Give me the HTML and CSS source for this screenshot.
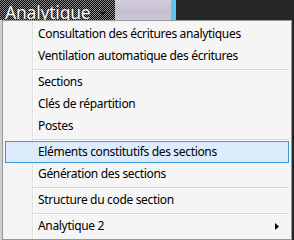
FILE: index.html
```html
<!DOCTYPE html>
<html lang="fr">
<head>
  <meta charset="UTF-8" />
  <title>Menu Analytique</title>
  <link rel="stylesheet" href="styles.css">
</head>
<body>

  <div class="topbar">
    <div class="tab">
      <span class="tab-label">Analytique</span>
      <span class="tab-caret"></span>
    </div>
    <div class="strip"></div>
    <div class="accent"></div>
    <div class="dark"></div>
  </div>

  <div class="stage">
    <div class="edge-left"></div>

    <ul class="menu">
      <li class="item">Consultation des écritures analytiques</li>
      <li class="item">Ventilation automatique des écritures</li>
      <li class="sep"></li>
      <li class="item">Sections</li>
      <li class="item">Clés de répartition</li>
      <li class="item">Postes</li>
      <li class="sep"></li>
      <li class="item hot">Eléments constitutifs des sections</li>
      <li class="item">Génération des sections</li>
      <li class="sep"></li>
      <li class="item">Structure du code section</li>
      <li class="sep"></li>
      <li class="item sub">
        <span>Analytique 2</span>
        <svg class="arrow" width="4" height="7" viewBox="0 0 4 7"><polygon points="0,0 4,3.5 0,7" fill="#000"/></svg>
      </li>
    </ul>

    <div class="edge-right"></div>
  </div>

</body>
</html>
```

FILE: styles.css
```css
/* Reset */
* {
  box-sizing: border-box;
  margin: 0;
  padding: 0;
}
body {
  width: 294px;
  height: 240px;
  overflow: hidden;
  background: #262626;
  font-family: 'Noto Sans', 'Open Sans', sans-serif;
  font-size: 12px;
  color: #000;
}

/* App strip behind the menu */
.topbar {
  display: flex;
  height: 20px;
  overflow: hidden;
}
.tab {
  width: 115px;
  display: flex;
  align-items: flex-start;
  gap: 9px;
  padding-left: 5px;
  background: repeating-conic-gradient(#000 0 25%, #8c8c8c 0 50%) 0 0 / 2px 2px;
  overflow: hidden;
}
.tab-label {
  font-size: 17.5px;
  line-height: 24px;
  letter-spacing: -0.2px;
  color: #fff;
  text-shadow: 0 0 1px #000;
}
.tab-caret {
  margin-top: 12px;
  width: 0;
  height: 0;
  border-left: 3px solid transparent;
  border-right: 3px solid transparent;
  border-top: 3px solid #000;
}
.strip {
  width: 56px;
  background: linear-gradient(180deg, #d2ccd9 0%, #c4bfcf 60%, #cbc6d4 100%);
}
.accent {
  width: 5px;
  background: #5ac6ec;
}
.dark {
  flex: 1;
  background: #262626;
}

.stage {
  display: flex;
  height: 220px;
}
.edge-left {
  width: 2px;
  background: #cfcfcf;
}
.edge-right {
  width: 2px;
  background: #262626;
}

/* Context menu */
.menu {
  list-style: none;
  width: 290px;
  height: 220px;
  border: 1px solid #979797;
  padding: 2px 0;
  background:
    linear-gradient(90deg, transparent 29px, #e0e0e0 29px, #e0e0e0 30px, #fff 30px, #fff 31px, transparent 31px),
    #f5f5f5;
}
.item {
  height: 22px;
  line-height: 20px;
  margin: 0 2px;
  padding-left: 32px;
  border: 1px solid transparent;
  letter-spacing: -0.33px;
  white-space: nowrap;
}
.item.hot {
  background: #dcecfc;
  border-color: #3a9ad9;
}
.item.sub {
  display: flex;
  align-items: center;
  justify-content: space-between;
  padding-right: 9px;
}
.sep {
  height: 4px;
  margin: 0 2px 0 30px;
  background: linear-gradient(180deg, transparent 2px, #d7d7d7 2px, #d7d7d7 3px, #fff 3px);
}
```
